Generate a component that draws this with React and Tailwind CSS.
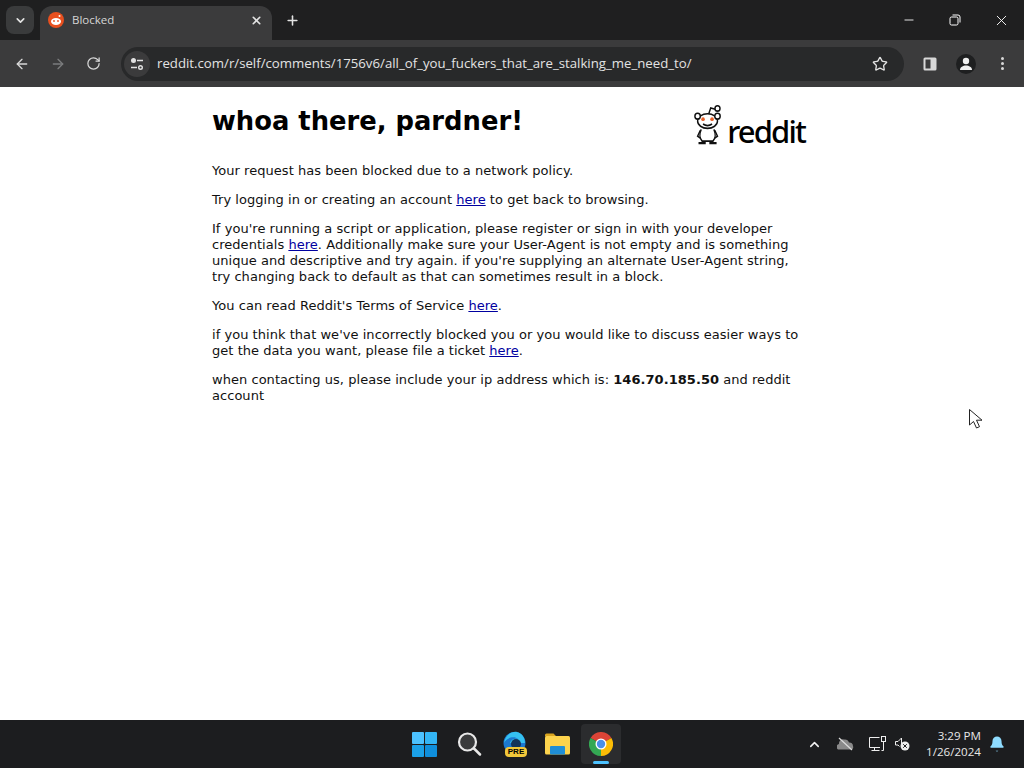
import React from 'react';
import { ChevronDown, X, Plus, ArrowLeft, ArrowRight, RotateCw, Star, ChevronUp, Minus, Bell } from 'lucide-react';

const TabStrip = () => (
  <div className="h-10 bg-[#1f1f20] flex items-end shrink-0">
    <div className="w-[40px] h-full flex items-center justify-center">
      <div className="w-[28px] h-[28px] rounded-lg bg-[#3a3b3c] flex items-center justify-center">
        <ChevronDown size={13} strokeWidth={3} color="#e3e3e3" />
      </div>
    </div>
    <div className="w-[232px] h-[34px] bg-[#3b3b3c] rounded-t-xl flex items-center pl-[8px] pr-[9px] pb-[6px]">
      <svg width="16" height="16" viewBox="0 0 16 16" className="shrink-0">
        <circle cx="8" cy="8" r="8" fill="#e8501f" />
        <ellipse cx="8" cy="9.500" rx="5" ry="3.400" fill="#fff" />
        <circle cx="6" cy="9" r="0.900" fill="#e8501f" />
        <circle cx="10" cy="9" r="0.900" fill="#e8501f" />
        <circle cx="11.500" cy="4" r="1" fill="#fff" />
      </svg>
      <span className="ml-[8px] text-[11.5px] text-[#d5d5d5] flex-1 font-['Open_Sans',sans-serif]">Blocked</span>
      <X size={13} strokeWidth={3} color="#e3e3e3" />
    </div>
    <div className="w-[40px] h-full flex items-center justify-center">
      <Plus size={15} strokeWidth={2.500} color="#e3e3e3" />
    </div>
    <div className="flex-1 h-full flex items-center justify-end">
      <div className="w-[46px] flex justify-center"><Minus size={14} strokeWidth={1.500} color="#fff" /></div>
      <div className="w-[46px] flex justify-center">
        <svg width="12" height="12" viewBox="0 0 12 12" fill="none" stroke="#fff" strokeWidth="1">
          <rect x="1" y="3" width="8" height="8" rx="1.500" />
          <path d="M3.500 1h5.500a2 2 0 0 1 2 2v5.500" />
        </svg>
      </div>
      <div className="w-[46px] flex justify-center"><X size={17} strokeWidth={1.300} color="#fff" /></div>
    </div>
  </div>
);

const Toolbar = () => (
  <div className="h-[47px] bg-[#3b3b3c] flex items-center shrink-0">
    <div className="w-[121px] flex items-center pl-[14px] gap-[20px]">
      <ArrowLeft size={16} strokeWidth={2} color="#d8d8d8" />
      <ArrowRight size={16} strokeWidth={2} color="#7b7c7d" />
      <RotateCw size={15} strokeWidth={2} color="#d8d8d8" />
    </div>
    <div className="w-[783px] h-[34px] bg-[#28292a] rounded-full flex items-center pl-[3px] pr-[16px]">
      <div className="w-[26px] h-[26px] rounded-full bg-[#3b3b3c] flex items-center justify-center">
        <svg width="14" height="14" viewBox="0 0 14 14" fill="none" stroke="#e3e3e3" strokeWidth="1.400">
          <circle cx="3.500" cy="3.500" r="1.800" fill="#e3e3e3" />
          <path d="M7 3.500h6M1 10.500h6" />
          <circle cx="10.500" cy="10.500" r="1.800" />
        </svg>
      </div>
      <span className="ml-[7px] flex-1 text-[13.230px] text-[#e3e3e3] font-['Open_Sans',sans-serif]">reddit.com/r/self/comments/1756v6/all_of_you_fuckers_that_are_stalking_me_need_to/</span>
      <Star size={16} strokeWidth={2} color="#e3e3e3" />
    </div>
    <div className="flex-1 flex items-center pl-[19px]">
      <svg width="14" height="14" viewBox="0 0 14 14" className="shrink-0">
        <rect x="0.500" y="0.500" width="13" height="13" rx="1.500" fill="#d8d8d8" />
        <rect x="2.500" y="2.500" width="5" height="9" fill="#3b3b3c" />
      </svg>
      <div className="ml-[19px] w-[20px] h-[20px] rounded-full bg-[#1e1f20] flex items-center justify-center">
        <svg width="14" height="14" viewBox="0 0 14 14" fill="#f0f0f0">
          <circle cx="7" cy="4" r="3.200" />
          <path d="M1 13c0-3 3-4.500 6-4.500s6 1.500 6 4.500z" />
        </svg>
      </div>
      <div className="ml-[25px] flex flex-col gap-[2px]">
        <span className="w-[3px] h-[3px] rounded-full bg-[#d8d8d8]" />
        <span className="w-[3px] h-[3px] rounded-full bg-[#d8d8d8]" />
        <span className="w-[3px] h-[3px] rounded-full bg-[#d8d8d8]" />
      </div>
    </div>
  </div>
);

const Here = () => <a href="#here" className="text-[#0000a0] underline">here</a>;

const RedditLogo = () => (
  <div className="flex items-end">
    <svg width="28" height="41" viewBox="0 0 31 42" preserveAspectRatio="none" fill="none" stroke="#111" strokeWidth="1.600">
      <path d="M16 11l2.500-7 5 1.500" />
      <circle cx="26" cy="4.500" r="2.800" />
      <ellipse cx="15" cy="17.500" rx="11" ry="7.500" fill="#fff" />
      <circle cx="4" cy="12.500" r="3" fill="#fff" />
      <circle cx="26" cy="12.500" r="3" fill="#fff" />
      <circle cx="10" cy="15.500" r="2" fill="#e8622a" stroke="none" />
      <circle cx="20" cy="15.500" r="2" fill="#e8622a" stroke="none" />
      <path d="M10 20.500c3 2 7 2 10 0" />
      <path d="M8 26c-2 4-2 9 1 12h12c3-3 3-8 1-12" />
      <path d="M7 27l-3 6 3 2M23 27l3 6-3 2" />
      <path d="M5 40h8M17 40h8" strokeWidth="2.400" />
    </svg>
    <span className="ml-[5px] text-[31px] leading-[28px] tracking-[-1.850px] font-medium text-black font-['Noto_Sans',sans-serif]">reddit</span>
  </div>
);

const Page = () => (
  <div className="flex-1 bg-white">
    <div className="w-[594px] ml-[212px] text-[13px] leading-[16px] tracking-[0.040px] text-[#111] font-['DejaVu_Sans',sans-serif]">
      <div className="flex justify-between items-start h-[76px] pt-[17px]">
        <h1 className="text-[25.800px] leading-[34px] tracking-normal font-bold text-black">whoa there, pardner!</h1>
        <div className="pr-[1px]"><RedditLogo /></div>
      </div>
      <p className="mb-[13px]">Your request has been blocked due to a network policy.</p>
      <p className="mb-[13px]">Try logging in or creating an account <Here /> to get back to browsing.</p>
      <p className="mb-[13px]">If you're running a script or application, please register or sign in with your developer credentials <Here />. Additionally make sure your User-Agent is not empty and is something unique and descriptive and try again. if you're supplying an alternate User-Agent string, try changing back to default as that can sometimes result in a block.</p>
      <p className="mb-[13px]">You can read Reddit's Terms of Service <Here />.</p>
      <p className="mb-[13px]">if you think that we've incorrectly blocked you or you would like to discuss easier ways to get the data you want, please file a ticket <Here />.</p>
      <p>when contacting us, please include your ip address which is: <b>146.70.185.50</b> and reddit account</p>
    </div>
  </div>
);

const Taskbar = () => (
  <div className="h-12 bg-[#1c1d1f] flex items-center shrink-0">
    <div className="ml-[412px] flex items-center">
      <svg width="25" height="25" viewBox="0 0 25 25" className="shrink-0">
        <rect x="0" y="0" width="12" height="12" rx="1" fill="#4cc2ff" />
        <rect x="13" y="0" width="12" height="12" rx="1" fill="#33b5f5" />
        <rect x="0" y="13" width="12" height="12" rx="1" fill="#1ba1e8" />
        <rect x="13" y="13" width="12" height="12" rx="1" fill="#0f8fdc" />
      </svg>
      <svg className="ml-[20px]" width="25" height="25" viewBox="0 0 25 25" fill="none">
        <circle cx="10.500" cy="10" r="8.500" fill="#3a3b3c" stroke="#e8e8e8" strokeWidth="2.200" />
        <path d="M17 16.500l6 6" stroke="#e8e8e8" strokeWidth="2.500" strokeLinecap="round" />
      </svg>
      <div className="ml-[20px] w-[25px] h-[26px] relative">
        <svg width="25" height="24" viewBox="0 0 25 24">
          <circle cx="12.500" cy="12" r="11" fill="#1b78d0" />
          <path d="M2 12C3 4 10 0 15 1c5 1 8 6 8 11H8c1-4 5-5 8-4-3-3-11-2-14 4z" fill="#35c1f1" />
          <circle cx="14" cy="13" r="5" fill="#13335a" />
        </svg>
        <span className="absolute left-[3px] bottom-0 w-[22px] h-[10px] rounded-sm bg-[#f2c83a] text-[8px] leading-[10px] font-bold text-black text-center font-['Liberation_Sans',sans-serif]">PRE</span>
      </div>
      <svg className="ml-[18px]" width="25" height="22" viewBox="0 0 25 22">
        <path d="M0 2a1.500 1.500 0 0 1 1.500-1.500h7l3 3h-11.500z" fill="#d9a520" />
        <rect x="0" y="3" width="25" height="18.500" rx="1.500" fill="#fcd34d" />
        <rect x="5" y="13" width="15" height="8.500" rx="1" fill="#1f8ed6" />
      </svg>
      <div className="ml-[11px] w-[40px] h-[40px] rounded bg-[#2b2c2e] relative flex items-center justify-center">
        <svg width="24" height="24" viewBox="0 0 24 24">
          <path d="M12 12L1.600 6A12 12 0 0 1 22.400 6z" fill="#dc4437" />
          <path d="M12 12l10.400-6A12 12 0 0 1 12 24z" fill="#fbbc05" />
          <path d="M12 12L12 24A12 12 0 0 1 1.600 6z" fill="#34a853" />
          <circle cx="12" cy="12" r="5.500" fill="#fff" />
          <circle cx="12" cy="12" r="4.200" fill="#4a8fe8" />
        </svg>
        <span className="absolute bottom-0 left-[12px] w-[16px] h-[3px] rounded-full bg-[#4cc2ff]" />
      </div>
    </div>
    <div className="ml-[186px] flex items-center">
      <ChevronUp size={15} strokeWidth={2.500} color="#f0f0f0" />
      <svg className="ml-[15px]" width="17" height="14" viewBox="0 0 17 14">
        <path d="M1 12.500a3 3 0 0 1 1-5.500 4 4 0 0 1 5-4.500 4.500 4.500 0 0 1 5 3 3.500 3.500 0 0 1 4 3.500 3 3 0 0 1-1 3.500z" fill="#8a8a8a" />
        <path d="M2 1l13 12" stroke="#dcdcdc" strokeWidth="1.200" />
      </svg>
      <svg className="ml-[15px]" width="17" height="16" viewBox="0 0 17 16" fill="none" stroke="#eee" strokeWidth="1">
        <path d="M11 11.500H.5v-10h10M5.500 11.500v3M2.500 14.500h8" />
        <rect x="12.500" y="0.500" width="4" height="5" />
        <path d="M14.500 5.500v9h-2" />
      </svg>
      <svg className="ml-[9px]" width="15" height="14" viewBox="0 0 15 14" fill="none" stroke="#eee" strokeWidth="1">
        <path d="M.5 4.500h2.500l3.500-3.500v6" />
        <path d="M.5 4.500v3.500h2.500l1.500 1.500" />
        <circle cx="10" cy="9" r="4.500" fill="#eee" stroke="none" />
        <path d="M8.200 7.200l3.600 3.600m0-3.600l-3.600 3.600" stroke="#1c1d1f" />
      </svg>
      <div className="ml-[1px] w-[70px] text-right text-[11.600px] leading-[16px] text-[#e8e8e8] font-['Open_Sans',sans-serif]">
        <div>3:29 PM</div>
        <div>1/26/2024</div>
      </div>
      <Bell className="ml-[7px]" size={18} strokeWidth={0} fill="#8fdcff" />
    </div>
  </div>
);

const Cursor = () => (
  <svg className="absolute left-[968px] top-[408px]" width="15" height="22" viewBox="0 0 15 22" fill="#fff" stroke="#222" strokeWidth="1">
    <path d="M1.500 1.500V17l4-3.500 3 6.500 3-1.300-3-6.500h5.500z" />
  </svg>
);

export default function App() {
  return (
    <div className="w-[1024px] h-[768px] flex flex-col overflow-hidden relative">
      <TabStrip />
      <Toolbar />
      <Page />
      <Taskbar />
      <Cursor />
    </div>
  );
}
